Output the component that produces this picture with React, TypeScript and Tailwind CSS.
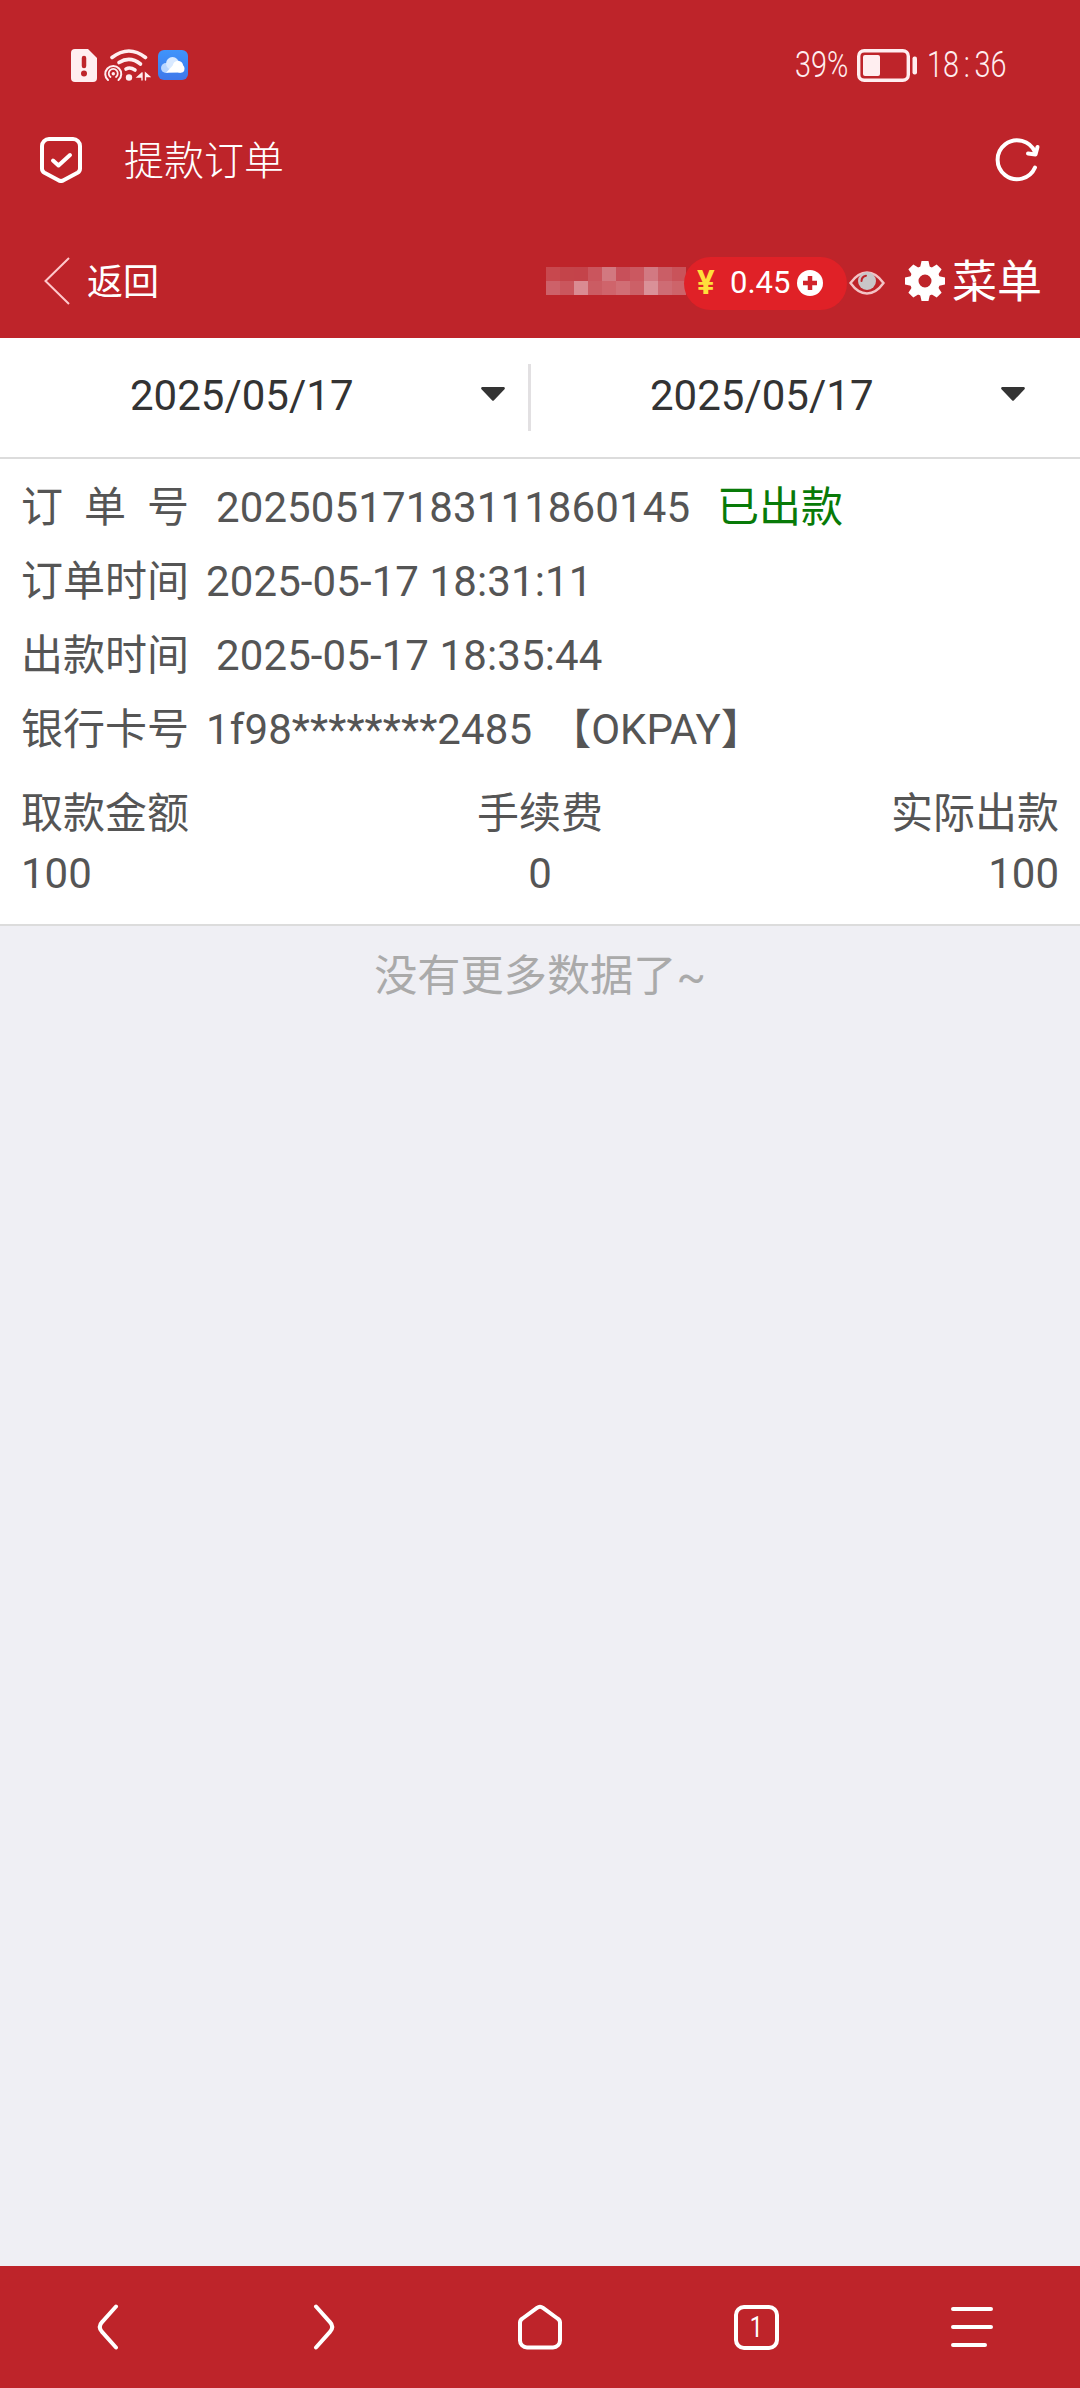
import React from "react";

interface Order {
  id: string;
  status: string;
  createdAt: string;
  paidAt: string;
  card: string;
  channel: string;
  amount: string;
  fee: string;
  actual: string;
}

const order: Order = {
  id: "20250517183111860145",
  status: "已出款",
  createdAt: "2025-05-17 18:31:11",
  paidAt: "2025-05-17 18:35:44",
  card: "1f98********2485",
  channel: "【OKPAY】",
  amount: "100",
  fee: "0",
  actual: "100",
};

// masked user name
const mosaic = [
  "bg-[#c8484e]", "bg-[#c4444a]", "bg-[#c4434a]", "bg-[#ca555d]", "bg-[#d27880]",
  "bg-[#c8505a]", "bg-[#cb5860]", "bg-[#d27982]", "bg-[#ca5e66]", "bg-[#c9535a]",
  "bg-[#cd6169]", "bg-[#ca565d]", "bg-[#da8b92]", "bg-[#cb5c63]", "bg-[#cf646b]",
  "bg-[#d16e75]", "bg-[#cc6067]", "bg-[#da9198]", "bg-[#ce6c74]", "bg-[#cd646a]",
];

const StatusBar = () => (
  <div className="h-24 pt-[34px] pl-[71px] pr-[72px] flex justify-between items-center text-[#ffeef0]">
    <div className="flex items-center">
      <svg width="26" height="33" viewBox="0 0 26 33">
        <path
          d="M4 0H17L26 9V29a4 4 0 0 1-4 4H4a4 4 0 0 1-4-4V4a4 4 0 0 1 4-4Z"
          fill="currentColor"
        />
        <path d="M13 9V17" stroke="#be242a" strokeWidth="4.5" strokeLinecap="round" />
        <circle cx="13" cy="24.5" r="3" fill="#be242a" />
      </svg>
      <svg className="ml-[7px]" width="47" height="33" viewBox="0 0 47 33" fill="none" stroke="currentColor" strokeLinecap="round">
        <path d="M8 8.5Q25 -4.500 41.500 8.500" strokeWidth="3.600" />
        <path d="M15 13.500Q26 6.500 36.500 15" strokeWidth="3.600" />
        <path d="M22 20Q26 17.500 31 21" strokeWidth="3.600" />
        <circle cx="25" cy="28.500" r="3.200" fill="currentColor" stroke="none" />
        <path d="M4 31A8 8 0 1 1 14.500 31" strokeWidth="2" />
        <path d="M6.500 28A4.500 4.500 0 1 1 12 28" strokeWidth="1.800" />
        <circle cx="9.300" cy="24.800" r="1.700" fill="currentColor" stroke="none" />
        <path d="M38 24V31M38 24L33.500 28H38M41.500 31V24L45.500 27.500H41.500" strokeWidth="1.400" fill="currentColor" />
      </svg>
      <svg className="ml-[7px]" width="30" height="30" viewBox="0 0 30 30">
        <defs>
          <linearGradient id="cloudBg" x1="0" y1="0" x2="0" y2="1">
            <stop offset="0" stopColor="#3f94fb" />
            <stop offset="1" stopColor="#3f78ea" />
          </linearGradient>
        </defs>
        <rect width="30" height="30" rx="6" fill="url(#cloudBg)" />
        <circle cx="8" cy="18" r="5" fill="#b9d6ff" />
        <circle cx="14.500" cy="13.500" r="6.500" fill="#d9e9ff" />
        <circle cx="20" cy="16" r="5.200" fill="#fff" />
        <path d="M8 22.800 18 12 23 22.500Z" fill="#fff" />
        <circle cx="22.500" cy="18.700" r="4" fill="#fff" />
      </svg>
    </div>
    <div className="flex items-center text-[36px] leading-8 font-light">
      <span className="w-[54px] origin-left scale-x-80">39%</span>
      <svg className="ml-[8px] mr-[10px]" width="60" height="33" viewBox="0 0 60 33">
        <rect x="1.700" y="1.700" width="49.600" height="29.600" rx="5.500" fill="none" stroke="currentColor" strokeWidth="3.400" />
        <rect x="6" y="6" width="17" height="21" rx="2" fill="currentColor" />
        <rect x="55.500" y="7.500" width="4.500" height="18" rx="2" fill="currentColor" />
      </svg>
      <span className="w-[81px] origin-left scale-x-80 whitespace-nowrap">
        18<span className="mx-[6px]">:</span>36
      </span>
    </div>
  </div>
);

const TitleBar = () => (
  <div className="h-32 pl-10 pr-[40px] flex items-center">
    <svg width="42" height="46" viewBox="0 0 42 46" fill="none" stroke="#fff" strokeWidth="4" strokeLinecap="round" strokeLinejoin="round">
      <path d="M9 2H33a7 7 0 0 1 7 7V31.500a5 5 0 0 1-2.500 4.300L23.500 43.300a5 5 0 0 1-5 0L4.500 35.800A5 5 0 0 1 2 31.500V9A7 7 0 0 1 9 2Z" />
      <path d="M13 23.500 18.500 28.500 30 18" />
    </svg>
    <h1 className="ml-[42px] mt-1 text-[40px] leading-[40px] font-light">提款订单</h1>
    <svg className="ml-auto" width="45" height="44" viewBox="0 0 45 44" fill="none" stroke="#fff" strokeWidth="4" strokeLinecap="round" strokeLinejoin="round">
      <path d="M40 29.500A19.500 19.500 0 1 1 40 14" />
      <path d="M33 15.500 40.500 16.500 42.500 9" />
    </svg>
  </div>
);

const NavBar = () => (
  <div className="h-[114px] pl-11 pr-[38px] flex items-center">
    <svg width="26" height="48" viewBox="0 0 26 48" fill="none" stroke="#ffc9cc" strokeWidth="2">
      <path d="M25 1 1.500 24 25 47" />
    </svg>
    <span className="ml-[17px] mt-1 text-[36px] leading-[36px]">返回</span>
    <div className="ml-auto grid grid-cols-10">
      {mosaic.map((color, i) => (
        <span key={i} className={`w-3.5 h-3.5 ${color}`} />
      ))}
    </div>
    <div className="-ml-0.5 w-[163px] h-[53px] pl-[13px] mt-1 rounded-full bg-[#e02127] flex items-center">
      <span className="w-[19px] text-[33px] leading-8 font-bold text-[#ffdf3c]">¥</span>
      <span className="ml-[14px] text-[31px] leading-8">0.45</span>
      <svg className="ml-[7px]" width="26" height="26" viewBox="0 0 26 26">
        <circle cx="13" cy="13" r="13" fill="#fff" />
        <path d="M13 6V20M6 13H20" stroke="#d0232a" strokeWidth="4.500" />
      </svg>
    </div>
    <svg className="ml-0.5 mt-1" width="36" height="24" viewBox="0 0 36 24">
      <path d="M1.500 12Q9 1.500 18 1.500T34.500 12Q27 22.500 18 22.500T1.500 12Z" fill="none" stroke="#f3c3c5" strokeWidth="2.400" />
      <circle cx="18" cy="10" r="9" fill="#c9c6c8" />
      <path d="M12.500 10A5.500 5.500 0 0 1 17 4.800" fill="none" stroke="#be242a" strokeWidth="2" strokeLinecap="round" />
    </svg>
    <svg className="ml-5" width="40" height="40" viewBox="-20 -20 40 40">
      <circle r="10.800" fill="none" stroke="#fff" strokeWidth="8.600" />
      {[0, 45, 90, 135, 180, 225, 270, 315].map((deg) => (
        <path key={deg} d="M-5 -13 -3.500 -20H3.500L5 -13Z" fill="#fff" transform={`rotate(${deg})`} />
      ))}
    </svg>
    <span className="ml-[7px] mt-0.5 text-[45px] leading-[45px]">菜单</span>
  </div>
);

const Caret = () => (
  <svg width="24" height="14" viewBox="0 0 24 14">
    <path d="M1.500 0H22.500a1.300 1.300 0 0 1 1 2.200L13 13.300a1.400 1.400 0 0 1-2 0L.5 2.200A1.300 1.300 0 0 1 1.500 0Z" fill="#333" />
  </svg>
);

const DateFilter = () => (
  <div className="h-[121px] bg-white border-b-2 border-[#dcdcdc] flex text-[#333]">
    <div className="w-[531px] h-[67px] mt-[26px] pl-[130px] pr-[23px] border-r-[3px] border-[#e2e0e2] flex items-center justify-between">
      <span className="leading-[42px] -mt-1">2025/05/17</span>
      <span className="-mt-2"><Caret /></span>
    </div>
    <div className="flex-1 h-[67px] mt-[26px] pl-[119px] pr-[55px] flex items-center justify-between">
      <span className="leading-[42px] -mt-1">2025/05/17</span>
      <span className="-mt-2"><Caret /></span>
    </div>
  </div>
);

const OrderCard = ({ data }: { data: Order }) => (
  <div className="h-[467px] px-[21px] pt-3 bg-white border-b-2 border-[#dcdcdc] text-[#555]">
    <div className="h-[74px] flex items-center">
      <div className="w-[168px] flex justify-between">
        <span>订</span>
        <span>单</span>
        <span>号</span>
      </div>
      <span className="ml-[27px] tracking-[0.1px]">{data.id}</span>
      <span className="ml-[27px] text-[#087a08]">{data.status}</span>
    </div>
    <div className="h-[74px] flex items-center">
      <span>订单时间</span>
      <span className="ml-[17px] tracking-[0.1px]">{data.createdAt}</span>
    </div>
    <div className="h-[74px] flex items-center">
      <span>出款时间</span>
      <span className="ml-[27px] tracking-[0.1px]">{data.paidAt}</span>
    </div>
    <div className="h-[74px] flex items-center">
      <span>银行卡号</span>
      <span className="ml-[17px] tracking-[0.1px]">{data.card}</span>
      <span className="ml-[17px]">{data.channel}</span>
    </div>
    <div className="mt-[17px] grid grid-cols-3 leading-[60px]">
      <div>
        <p>取款金额</p>
        <p>{data.amount}</p>
      </div>
      <div className="text-center">
        <p>手续费</p>
        <p>{data.fee}</p>
      </div>
      <div className="text-right">
        <p>实际出款</p>
        <p>{data.actual}</p>
      </div>
    </div>
  </div>
);

const BottomBar = () => (
  <nav className="h-[122px] bg-[#be242a] grid grid-cols-5 items-center justify-items-center">
    <svg width="46" height="46" viewBox="0 0 46 46" fill="none" stroke="#fff" strokeWidth="4" strokeLinecap="round">
      <path d="M31 2.500 17.500 17.500Q12 23 17.500 28.500L31 43.500" />
    </svg>
    <svg width="46" height="46" viewBox="0 0 46 46" fill="none" stroke="#fff" strokeWidth="4" strokeLinecap="round">
      <path d="M15 2.500 28.500 17.500Q34 23 28.500 28.500L15 43.500" />
    </svg>
    <svg width="46" height="46" viewBox="0 0 46 46" fill="none" stroke="#fff" strokeWidth="4" strokeLinejoin="round">
      <path d="M20 3.800a5 5 0 0 1 6 0L40.500 14.500a5 5 0 0 1 2.500 4V36.500a7 7 0 0 1-7 7H10a7 7 0 0 1-7-7V18.500a5 5 0 0 1 2.500-4Z" />
    </svg>
    <div className="w-[45px] h-[45px] border-4 border-white rounded-[10px] flex items-center justify-center text-white text-[29px] leading-none">
      <span className="scale-x-80">1</span>
    </div>
    <svg width="46" height="46" viewBox="0 0 46 46" fill="none" stroke="#fff" strokeWidth="4" strokeLinecap="round">
      <path d="M4 5H42M4 23H42M4 41H36" />
    </svg>
  </nav>
);

const App = () => {
  return (
    <div className="w-[1080px] h-[2388px] flex flex-col bg-[#efeff4] text-[42px] font-[Roboto,'Noto_Sans_CJK_SC',sans-serif]">
      <header className="h-[338px] bg-[#be242a] text-white">
        <StatusBar />
        <TitleBar />
        <NavBar />
      </header>
      <main className="flex-1 leading-[60px]">
        <DateFilter />
        <OrderCard data={order} />
        <p className="pt-[21px] text-center text-[43.2px] text-[#aaa]">没有更多数据了~</p>
      </main>
      <BottomBar />
    </div>
  );
};

export default App;
